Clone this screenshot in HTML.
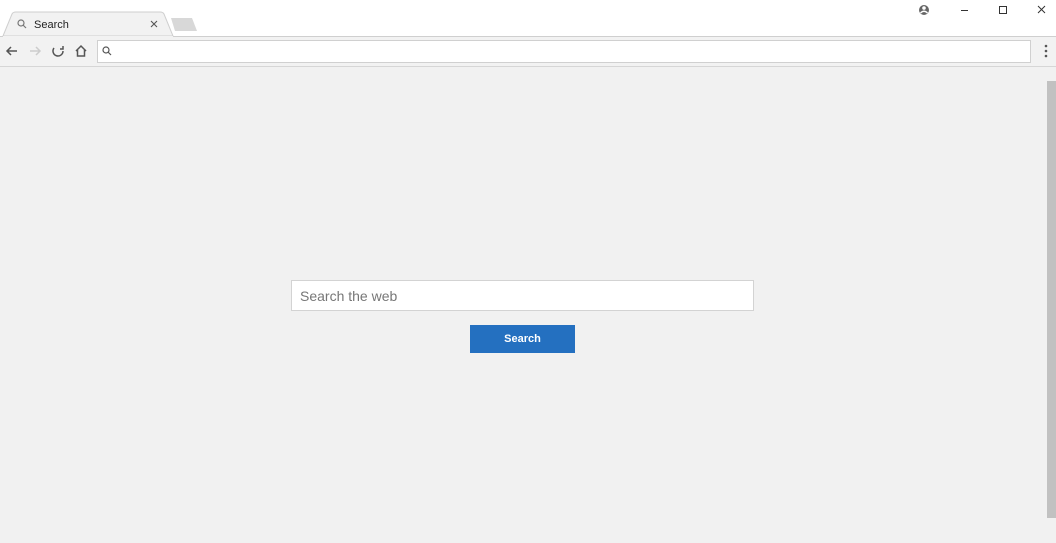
<!DOCTYPE html>
<html><head><style>
*{margin:0;padding:0;box-sizing:border-box}
body{width:1056px;height:543px;overflow:hidden;background:#f1f1f1;font-family:"Liberation Sans",sans-serif;position:relative}
.a{position:absolute}
</style></head><body>
<div class="a" style="left:0;top:0;width:1056px;height:36px;background:#fff"></div>
<svg class="a" style="left:0;top:0" width="1056" height="67">
<path d="M3 36 L12 14 Q13 12 16 12 L160 12 Q163 12 164 14 L173 36 Z" fill="#f2f2f2" stroke="#cfcfcf"/>
<path d="M171 18 L192 18 L197 31 L175 31 Z" fill="#d8d8d8"/>
<rect x="0" y="36" width="1056" height="30" fill="#f2f2f2"/>
<line x1="0" y1="36.5" x2="3" y2="36.5" stroke="#cfcfcf"/>
<line x1="173" y1="36.5" x2="1056" y2="36.5" stroke="#cfcfcf"/>
<line x1="0" y1="66.5" x2="1056" y2="66.5" stroke="#d6d6d6"/>
<rect x="97.5" y="40.5" width="933" height="22" fill="#fff" stroke="#d0d0d0"/>
<g fill="none" stroke="#777" stroke-width="1.2"><circle cx="21" cy="23" r="3"/><path d="M23 25 L26 28"/></g>
<g fill="none" stroke="#555" stroke-width="1.2"><circle cx="106" cy="50" r="3"/><path d="M108 52 L111 55"/></g>
<path d="M151 21 L157 27 M157 21 L151 27" stroke="#555" stroke-width="1.1"/>
<g fill="none" stroke="#555" stroke-width="1.5">
<path d="M17 51 L7 51 M11 47 L7 51 L11 55"/>
<path d="M54 48 A5 5 0 1 0 63 51 M63 46 L63 49 L60 49"/>
<path d="M76 51 L81 46 L86 51 M77.5 50 L77.5 56 L84.5 56 L84.5 50"/>
</g>
<path d="M30 51 L40 51 M36 47 L40 51 L36 55" fill="none" stroke="#ccc" stroke-width="1.5"/>
<circle cx="924" cy="10" r="5" fill="#666"/><circle cx="924" cy="8" r="1.8" fill="#fff"/><path d="M920.5 13 Q924 9.5 927.5 13" stroke="#fff" stroke-width="1.5" fill="none"/>
<line x1="961" y1="10.5" x2="968" y2="10.5" stroke="#333"/>
<rect x="999.5" y="6.5" width="7" height="7" fill="none" stroke="#333"/>
<path d="M1038 6 L1045 13 M1045 6 L1038 13" stroke="#333"/>
<g fill="#555"><circle cx="1046" cy="46" r="1.3"/><circle cx="1046" cy="51" r="1.3"/><circle cx="1046" cy="56" r="1.3"/></g>
</svg>
<div class="a" style="left:34px;top:19px;font-size:11px;color:#222">Search</div>
<div class="a" style="left:1046px;top:67px;width:10px;height:476px;background:#f1f1f1"></div>
<div class="a" style="left:1047px;top:81px;width:9px;height:437px;background:#c1c1c1"></div>
<div class="a" style="left:291px;top:280px;width:463px;height:31px;background:#fff;border:1px solid #d3d3d3;font-size:14px;color:#777;padding:7px 8px">Search the web</div>
<div class="a" style="left:470px;top:325px;width:105px;height:28px;background:#2470c0;color:#fff;font-size:11px;font-weight:bold;text-align:center;line-height:29px">Search</div>
</body></html>
